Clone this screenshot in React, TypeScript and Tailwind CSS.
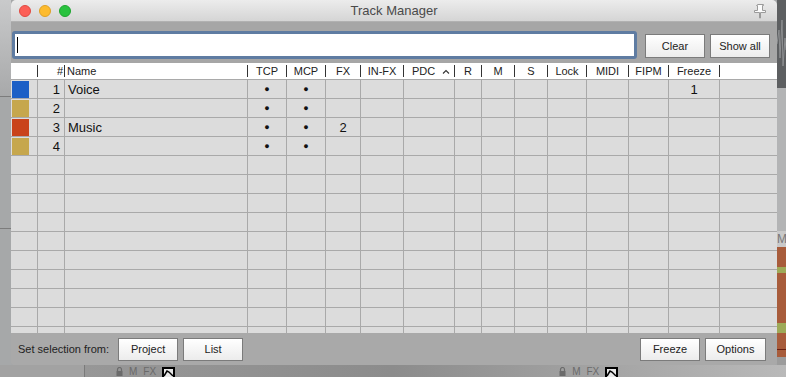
import React from "react";

type Track = {
  n: number;
  color: string;
  name: string;
  tcp: boolean;
  mcp: boolean;
  fx: string;
  freeze: string;
};

const tracks: Track[] = [
  { n: 1, color: "#1c5fc6", name: "Voice", tcp: true, mcp: true, fx: "", freeze: "1" },
  { n: 2, color: "#c6a74d", name: "", tcp: true, mcp: true, fx: "", freeze: "" },
  { n: 3, color: "#c9431b", name: "Music", tcp: true, mcp: true, fx: "2", freeze: "" },
  { n: 4, color: "#c6a74d", name: "", tcp: true, mcp: true, fx: "", freeze: "" },
];

const cols =
  "grid grid-cols-[27px_27px_183px_39px_39px_35px_43px_51px_27px_33px_33px_39px_42px_40px_51px_1fr]";

const headers = ["TCP", "MCP", "FX", "IN-FX", "PDC", "R", "M", "S", "Lock", "MIDI", "FIPM", "Freeze"];

function Btn({ label, w = "w-[60px]", h = "h-[23px]" }: { label: string; w?: string; h?: string }) {
  return (
    <div
      className={`${w} ${h} flex items-center justify-center border border-[#7b7b7b] bg-gradient-to-b from-[#ffffff] to-[#ececec] text-[11px] text-[#222]`}
    >
      {label}
    </div>
  );
}

function HeadCell({ children, align = "center" }: { children?: React.ReactNode; align?: string }) {
  return (
    <div className="flex h-full items-center">
      <div
        className={`flex-1 flex items-center ${
          align === "right" ? "justify-end pr-[1px]" : align === "left" ? "justify-start pl-[2px]" : "justify-center"
        }`}
      >
        {children}
      </div>
      <div className="w-px h-[12px] bg-[#333]" />
    </div>
  );
}

function Cell({ children, center = true, last = false }: { children?: React.ReactNode; center?: boolean; last?: boolean }) {
  return (
    <div
      className={`h-full flex items-center ${center ? "justify-center" : ""} ${last ? "" : "border-r border-[#a9a9a9]"}`}
    >
      {children}
    </div>
  );
}

function BottomIcons() {
  return (
    <div className="flex items-start gap-[6px] pt-[2px]">
      <svg width="7" height="9" viewBox="0 0 7 9">
        <path d="M1.5 4V2.5a2 2 0 0 1 4 0V4" fill="none" stroke="#6b6b6b" strokeWidth="1.2" />
        <rect x="0.5" y="4" width="6" height="5" fill="#6b6b6b" />
      </svg>
      <span className="text-[10px] leading-[10px] text-[#6a6a6a]">M</span>
      <span className="text-[10px] leading-[10px] text-[#6a6a6a]">FX</span>
      <div className="w-[13px] h-[12px] border-2 border-black bg-[#e8e8e8]">
        <svg width="9" height="8" viewBox="0 0 9 8">
          <path d="M0 7 L3 2 L5 3 L9 7" fill="none" stroke="#000" strokeWidth="1.5" />
        </svg>
      </div>
    </div>
  );
}

export default function App() {
  const rows = Array.from({ length: 14 }, (_, i) => tracks[i] ?? null);

  return (
    <div
      className="w-[786px] h-[377px] overflow-hidden flex flex-col bg-[#a5a7a8]"
      style={{ fontFamily: '"Liberation Sans", Arial, sans-serif' }}
    >
      <div className="flex h-[365px]">
        {/* desktop left */}
        <div className="w-[11px] flex flex-col bg-[#a6a8a9]">
          <div className="h-[96px] bg-gradient-to-b from-[#c9cacb] to-[#a8a9aa]" />
          <div className="h-px bg-[#7c7c7c]" />
          <div className="h-[131px]" />
          <div className="h-px bg-[#7c7c7c]" />
          <div className="flex-1" />
        </div>

        {/* window */}
        <div className="w-[766px] flex flex-col rounded-t-[5px] rounded-b-[4px] overflow-hidden bg-[#a8a8a8]">
          {/* title bar */}
          <div className="h-[22px] relative flex items-center justify-center border-b border-[#b1b1b1] bg-gradient-to-b from-[#ececec] to-[#d5d5d5]">
            <div className="absolute left-[8px] top-[5px] flex gap-[8px]">
              <div className="w-[12px] h-[12px] rounded-full bg-[#fc5f57] border border-[#df4a42]" />
              <div className="w-[12px] h-[12px] rounded-full bg-[#fdbb2e] border border-[#dea026]" />
              <div className="w-[12px] h-[12px] rounded-full bg-[#29c23f] border border-[#1ea52f]" />
            </div>
            <span className="text-[13px] text-[#4a4a4a]">Track Manager</span>
            <svg className="absolute right-[9px] top-[3px]" width="15" height="16" viewBox="0 0 15 16">
              <path
                d="M4.5 1.5h6v1h-1v5h3v2h-5v5.5h-1V9.5h-5v-2h3v-5h-1z"
                fill="#fbfbfb"
                stroke="#9a9a9a"
                strokeWidth="1"
                strokeLinejoin="round"
              />
            </svg>
          </div>

          {/* search toolbar */}
          <div className="h-[41px] flex items-end pb-[4px] pl-[1px] pr-[7px] bg-[#a6a6a6]">
            <div className="w-[626px] h-[28px] rounded-[3px] border-[3px] border-[#5f7ca2] bg-white flex items-center pl-[2px]">
              <div className="w-px h-[16px] bg-black" />
            </div>
            <div className="ml-[8px] mb-[1px] flex gap-[5px]">
              <Btn label="Clear" h="h-[24px]" />
              <Btn label="Show all" h="h-[24px]" />
            </div>
          </div>

          {/* header */}
          <div className={`${cols} h-[17px] bg-white border-b border-[#a9a9a9] text-[11px] text-[#222]`}>
            <HeadCell />
            <HeadCell align="right">#</HeadCell>
            <HeadCell align="left">Name</HeadCell>
            {headers.map((h) => (
              <HeadCell key={h}>
                {h === "PDC" ? (
                  <span className="flex items-center gap-[7px] pl-[4px]">
                    PDC
                    <svg width="8" height="5" viewBox="0 0 8 5">
                      <path d="M1 4.5 L4 1.5 L7 4.5" fill="none" stroke="#333" strokeWidth="1.1" />
                    </svg>
                  </span>
                ) : (
                  h
                )}
              </HeadCell>
            ))}
            <div />
          </div>

          {/* body */}
          <div className="flex-1 overflow-hidden bg-[#dcdcdc] text-[13px] text-[#111]">
            {rows.map((t, i) => (
              <div key={i} className={`${cols} h-[19px] border-b border-[#a9a9a9]`}>
                <div className="h-full flex items-center pl-[1px] border-r border-[#a9a9a9]">
                  {t ? <div className="w-[17px] h-[17px]" style={{ backgroundColor: t.color }} /> : null}
                </div>
                <div className="h-full flex items-center justify-end pr-[4px] border-r border-[#a9a9a9]">
                  {t ? t.n : ""}
                </div>
                <div className="h-full flex items-center pl-[3px] border-r border-[#a9a9a9]">{t ? t.name : ""}</div>
                <Cell>{t && t.tcp ? <span className="text-[9px]">●</span> : null}</Cell>
                <Cell>{t && t.mcp ? <span className="text-[9px]">●</span> : null}</Cell>
                <Cell>{t ? t.fx : ""}</Cell>
                <Cell />
                <Cell />
                <Cell />
                <Cell />
                <Cell />
                <Cell />
                <Cell />
                <Cell />
                <Cell>{t ? t.freeze : ""}</Cell>
                <Cell last />
              </div>
            ))}
          </div>

          {/* bottom bar */}
          <div className="h-[32px] flex items-center pl-[7px] pr-[11px] bg-[#a9a9a9] text-[11px] text-[#222]">
            <span>Set selection from:</span>
            <div className="ml-[9px] flex gap-[5px]">
              <Btn label="Project" />
              <Btn label="List" />
            </div>
            <div className="ml-auto flex gap-[5px]">
              <Btn label="Freeze" />
              <Btn label="Options" w="w-[61px]" />
            </div>
          </div>
        </div>

        {/* desktop right */}
        <div className="w-[9px] flex flex-col">
          <div className="h-[88px] bg-[#5d5f61] flex items-center">
            <svg width="9" height="88" viewBox="0 0 9 88">
              <path d="M0 44 L2 30 L3 58 L5 20 L6 66 L8 38 L9 50" fill="none" stroke="#8d8f91" strokeWidth="1" />
            </svg>
          </div>
          <div className="h-[143px] bg-[#b3b4b5]" />
          <div className="h-[16px] bg-[#c9c9c9] text-[12px] leading-[16px] text-[#777] overflow-hidden">M</div>
          <div className="h-[110px] bg-[#a85c3b] flex flex-col">
            <div className="h-[20px]" />
            <div className="h-[6px] bg-[#9eaa58]" />
            <div className="h-[50px]" />
            <div className="h-[10px] bg-[#9eaa58]" />
            <div className="h-[16px]" />
            <div className="h-px bg-[#6a1e10]" />
          </div>
          <div className="flex-1 bg-[#9c9c9c]" />
        </div>
      </div>

      {/* desktop bottom strip */}
      <div className="h-[12px] flex bg-gradient-to-r from-[#9a9a9a] via-[#8c8c8c] to-[#b9b9b9]">
        <div className="w-[85px] bg-[#a2a2a2] border-r border-[#7a7a7a]" />
        <div className="ml-[31px]">
          <BottomIcons />
        </div>
        <div className="ml-[384px]">
          <BottomIcons />
        </div>
      </div>
    </div>
  );
}
